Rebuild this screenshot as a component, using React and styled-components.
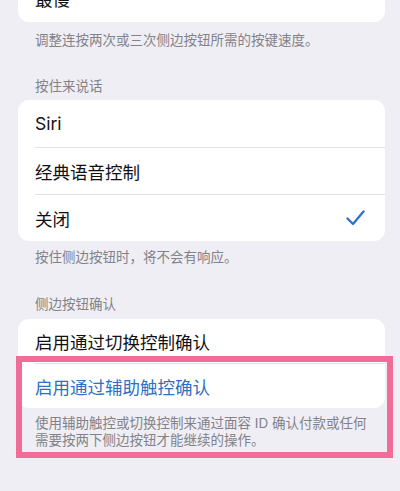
import React from 'react';
import styled, { createGlobalStyle } from 'styled-components';

const GlobalStyle = createGlobalStyle`
  html, body {
    margin: 0;
    padding: 0;
    background-color: #efeef4;
  }
  body {
    font-family: Inter, "Noto Sans CJK SC", sans-serif;
    -webkit-font-smoothing: antialiased;
  }
`;

const Page = styled.div`
  width: 400px;
  height: 491px;
  overflow: hidden;
  background-color: #efeef4;
`;

const Content = styled.div`
  margin-top: -25px;
  padding: 0 15px 0 18px;
  display: flex;
  flex-direction: column;
`;

const Section = styled.div`
  position: relative;
  display: flex;
  flex-direction: column;
`;

const Header = styled.div`
  margin-top: ${p => p.$top}px;
  margin-bottom: ${p => p.$bottom}px;
  padding-left: 17px;
  font-size: 13.5px;
  line-height: 18px;
  color: #838288;
`;

const Card = styled.div`
  background-color: #ffffff;
  border-radius: 11px;
  overflow: hidden;
  display: flex;
  flex-direction: column;
`;

const Row = styled.div`
  height: ${p => p.$h || 47}px;
  display: flex;
  align-items: center;
  justify-content: space-between;
  margin-left: 17px;
  padding-right: 20px;
  box-sizing: border-box;
  font-size: 17.5px;
  color: ${p => (p.$link ? '#2f70c2' : '#111114')};
  & + & {
    border-top: 1px solid #e2e2e6;
  }
`;

const Footer = styled.div`
  padding: ${p => p.$top}px 12px 0 17px;
  font-size: 13.5px;
  line-height: ${p => p.$lh || 18}px;
  color: #838288;
`;

const Highlight = styled.div`
  position: absolute;
  left: -2px;
  top: 37px;
  width: 377px;
  height: 102px;
  box-sizing: border-box;
  border: 6px solid #ef6d96;
  pointer-events: none;
`;

const Check = () => (
  <svg width="19" height="16" viewBox="0 0 19 16" fill="none">
    <path
      d="M1.5 8.5 L7 14 L17.5 1.5"
      stroke="#2f6fd1"
      strokeWidth="2.3"
      strokeLinecap="round"
      strokeLinejoin="round"
    />
  </svg>
);

export default function App() {
  return (
    <Page>
      <GlobalStyle />
      <Content>
        <Section>
          <Card>
            <Row>最慢</Row>
          </Card>
          <Footer $top={9}>调整连按两次或三次侧边按钮所需的按键速度。</Footer>
        </Section>

        <Section>
          <Header $top={28} $bottom={5}>按住来说话</Header>
          <Card>
            <Row>Siri</Row>
            <Row>经典语音控制</Row>
            <Row>
              关闭
              <Check />
            </Row>
          </Card>
          <Footer $top={7}>按住侧边按钮时，将不会有响应。</Footer>
        </Section>

        <Section>
          <Header $top={29} $bottom={6}>侧边按钮确认</Header>
          <Section>
            <Card>
              <Row $h={44}>启用通过切换控制确认</Row>
              <Row $h={45} $link>启用通过辅助触控确认</Row>
            </Card>
            <Footer $top={7} $lh={17}>
              使用辅助触控或切换控制来通过面容 ID 确认付款或任何需要按两下侧边按钮才能继续的操作。
            </Footer>
            <Highlight />
          </Section>
        </Section>
      </Content>
    </Page>
  );
}
